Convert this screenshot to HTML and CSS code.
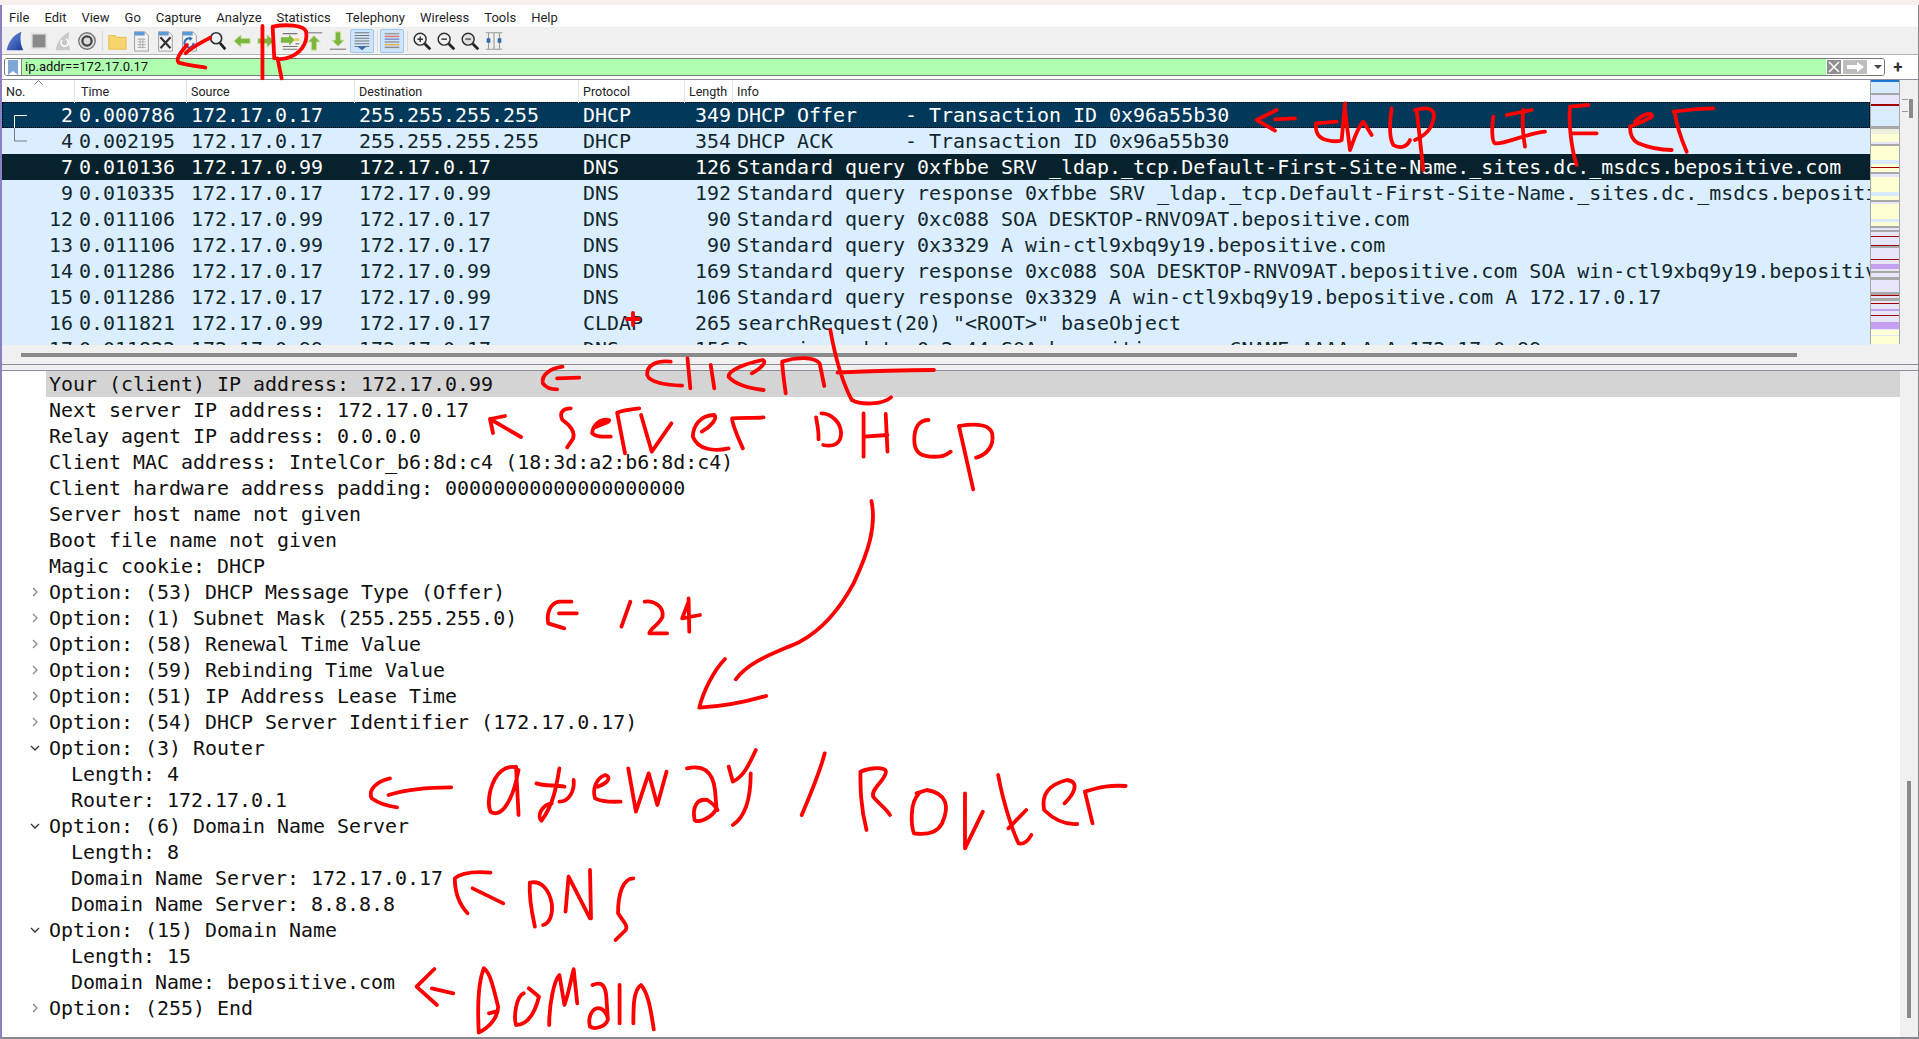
FILE: index.html
```html
<!DOCTYPE html>
<html lang="en">
<head>
<meta charset="utf-8">
<title>Wireshark DHCP capture</title>
<link rel="stylesheet" href="styles.css">
</head>
<body>
<div class="strip"></div>
<div class="app">
  <nav class="menu">
    <span>File</span><span>Edit</span><span>View</span><span>Go</span><span>Capture</span><span>Analyze</span><span>Statistics</span><span>Telephony</span><span>Wireless</span><span>Tools</span><span>Help</span>
  </nav>

  <div class="toolbar">
    <svg class="ic" viewBox="0 0 24 24"><defs><linearGradient id="fin" x1="0" y1="0" x2="1" y2="1"><stop offset="0" stop-color="#6d93dd"/><stop offset="1" stop-color="#173b9c"/></linearGradient></defs><path d="M3 22C5 12 11 5 19 2C17 9 18 16 21 22Z" fill="url(#fin)"/></svg>
    <svg class="ic" viewBox="0 0 24 24"><rect x="3" y="3" width="18" height="18" fill="#e2e2e2"/><rect x="5" y="5" width="14" height="14" fill="#8a8a8a"/></svg>
    <svg class="ic" viewBox="0 0 24 24"><path d="M4 22C6 12 11 6 19 2C17 9 18 16 20 22Z" fill="#c9c9c9"/><path d="M15 10a4 4 0 1 1-4 1" fill="none" stroke="#fff" stroke-width="1.6"/></svg>
    <svg class="ic" viewBox="0 0 24 24"><circle cx="12" cy="12" r="9" fill="#ddd" stroke="#777" stroke-width="1.5"/><circle cx="12" cy="12" r="5" fill="none" stroke="#444" stroke-width="2.5"/><circle cx="12" cy="12" r="2" fill="#ddd"/></svg>
    <i class="sep"></i>
    <svg class="ic" viewBox="0 0 24 24"><path d="M3 6h7l2 2h10v13H3Z" fill="#f7d36b" stroke="#e6bd52"/></svg>
    <svg class="ic" viewBox="0 0 24 24"><path d="M5 2h11l4 4v17H5Z" fill="#f4f4f4" stroke="#999"/><path d="M5 2h11v4H5Z" fill="#5d9bd8"/><path d="M8 10h9M8 13h9M8 16h9M8 19h9M11 9v11M14 9v11" stroke="#aaa" fill="none"/></svg>
    <svg class="ic" viewBox="0 0 24 24"><path d="M5 2h11l4 4v17H5Z" fill="#f4f4f4" stroke="#999"/><path d="M5 2h11v4H5Z" fill="#5d9bd8"/><path d="M7 8l11 12M18 8L7 20" stroke="#333" stroke-width="2.4"/></svg>
    <svg class="ic" viewBox="0 0 24 24"><path d="M5 2h11l4 4v17H5Z" fill="#f4f4f4" stroke="#999"/><path d="M5 2h11v4H5Z" fill="#5d9bd8"/><path d="M17 14a5 5 0 1 1-3-4.500" fill="none" stroke="#2f6fb5" stroke-width="2.2"/><path d="M12 7l4 2-3 3Z" fill="#2f6fb5"/></svg>
    <i class="gap"></i>
    <svg class="ic" viewBox="0 0 24 24"><circle cx="10" cy="9" r="6" fill="#eef2f5" stroke="#333" stroke-width="1.8"/><path d="M14 14l6 7" stroke="#222" stroke-width="3"/></svg>
    <svg class="ic" viewBox="0 0 24 24"><path d="M3 12l8-7v4h10v6H11v4Z" fill="#7cb63c" stroke="#d7e6c0"/></svg>
    <svg class="ic" viewBox="0 0 24 24"><path d="M21 12l-8-7v4H3v6h10v4Z" fill="#7cb63c" stroke="#d7e6c0"/></svg>
    <svg class="ic" viewBox="0 0 24 24"><path d="M4 4h16M4 18h16M4 21h16" stroke="#777" stroke-width="1.3"/><path d="M2 8h9V5l6 6-6 6v-3H2Z" fill="#7cb63c"/><path d="M17 9h5v3h-5Z" fill="#f3d250"/><path d="M18 15h4" stroke="#777" stroke-width="1.3"/></svg>
    <svg class="ic" viewBox="0 0 24 24"><path d="M3 3h18" stroke="#999" stroke-width="1.6"/><path d="M12 6l7 7h-4v9H9v-9H5Z" fill="#7cb63c" stroke="#d7e6c0"/></svg>
    <svg class="ic" viewBox="0 0 24 24"><path d="M3 21h18" stroke="#999" stroke-width="1.6"/><path d="M12 18l7-7h-4V2H9v9H5Z" fill="#7cb63c" stroke="#d7e6c0"/></svg>
    <span class="tg"><svg class="ic" viewBox="0 0 24 24"><path d="M4 3h16M4 6h16M4 9h16M4 12h16M4 15h16M4 18h16" stroke="#777" stroke-width="1.200"/><path d="M7 18h10l-5 4Z" fill="#2e6bb0"/></svg></span>
    <i class="sep"></i>
    <span class="tg"><svg class="ic" viewBox="0 0 24 24"><path d="M4 4h16" stroke="#999" stroke-width="1.600"/><path d="M4 7h16" stroke="#e0736c" stroke-width="1.600"/><path d="M4 10h16" stroke="#7a8fc8" stroke-width="1.600"/><path d="M4 13h16" stroke="#999" stroke-width="1.600"/><path d="M4 16h16" stroke="#e4b04c" stroke-width="1.600"/><path d="M4 19h16" stroke="#8a8a8a" stroke-width="1.600"/></svg></span>
    <i class="sep"></i>
    <svg class="ic" viewBox="0 0 24 24"><circle cx="10" cy="10" r="6.500" fill="#eef2f5" stroke="#333" stroke-width="1.600"/><path d="M7 10h6M10 7v6" stroke="#333" stroke-width="1.600"/><path d="M15 15l6 6" stroke="#222" stroke-width="3"/></svg>
    <svg class="ic" viewBox="0 0 24 24"><circle cx="10" cy="10" r="6.500" fill="#eef2f5" stroke="#333" stroke-width="1.600"/><path d="M7 10h6" stroke="#333" stroke-width="1.600"/><path d="M15 15l6 6" stroke="#222" stroke-width="3"/></svg>
    <svg class="ic" viewBox="0 0 24 24"><circle cx="10" cy="10" r="6.500" fill="#dfe3e6" stroke="#333" stroke-width="1.600"/><path d="M7 10h6" stroke="#666" stroke-width="2"/><path d="M15 15l6 6" stroke="#222" stroke-width="3"/></svg>
    <svg class="ic" viewBox="0 0 24 24"><path d="M3 3h18M3 21h18M6 3v18M18 3v18M12 3v18" stroke="#999" stroke-width="1.200"/><path d="M4 9h4v5H4ZM16 9h4v5h-4Z" fill="#2e6bb0"/></svg>
  </div>

  <div class="filter-row">
    <div class="filter">
      <span class="bm"><svg width="10" height="15" viewBox="0 0 10 15"><path d="M0 0h10v15L5 11 0 15Z" fill="#7fa8d8"/></svg></span>
      <span class="expr">ip.addr==172.17.0.17</span>
      <span class="fx"><svg width="14" height="14" viewBox="0 0 14 14"><rect width="14" height="14" fill="#8f8f8f"/><path d="M2 2l10 10M12 2L2 12" stroke="#fff" stroke-width="1.500"/></svg></span>
      <span class="fa"><svg width="24" height="14" viewBox="0 0 24 14"><rect width="24" height="14" rx="1" fill="#bdbdbd"/><path d="M4 5h10V2l7 5-7 5V9H4Z" fill="#fff"/></svg></span>
      <span class="fd"></span>
    </div>
    <span class="plus">+</span>
  </div>

  <section class="packets">
    <div class="plist">
      <div class="phead">
        <span>No.<svg class="sort" width="9" height="5" viewBox="0 0 9 5"><path d="M0.500 4.500l4-4 4 4" fill="none" stroke="#777"/></svg></span><span>Time</span><span>Source</span><span>Destination</span><span>Protocol</span><span>Length</span><span class="hinfo">Info</span>
      </div>
      <div class="prow cur"><span class="no">2</span><span>0.000786</span><span>172.17.0.17</span><span>255.255.255.255</span><span>DHCP</span><span class="len">349</span><span class="info">DHCP Offer    - Transaction ID 0x96a55b30</span></div>
      <div class="prow"><span class="no">4</span><span>0.002195</span><span>172.17.0.17</span><span>255.255.255.255</span><span>DHCP</span><span class="len">354</span><span class="info">DHCP ACK      - Transaction ID 0x96a55b30</span></div>
      <div class="prow alert"><span class="no">7</span><span>0.010136</span><span>172.17.0.99</span><span>172.17.0.17</span><span>DNS</span><span class="len">126</span><span class="info">Standard query 0xfbbe SRV _ldap._tcp.Default-First-Site-Name._sites.dc._msdcs.bepositive.com</span></div>
      <div class="prow"><span class="no">9</span><span>0.010335</span><span>172.17.0.17</span><span>172.17.0.99</span><span>DNS</span><span class="len">192</span><span class="info">Standard query response 0xfbbe SRV _ldap._tcp.Default-First-Site-Name._sites.dc._msdcs.bepositive.com SRV 0 100 389</span></div>
      <div class="prow"><span class="no">12</span><span>0.011106</span><span>172.17.0.99</span><span>172.17.0.17</span><span>DNS</span><span class="len">90</span><span class="info">Standard query 0xc088 SOA DESKTOP-RNVO9AT.bepositive.com</span></div>
      <div class="prow"><span class="no">13</span><span>0.011106</span><span>172.17.0.99</span><span>172.17.0.17</span><span>DNS</span><span class="len">90</span><span class="info">Standard query 0x3329 A win-ctl9xbq9y19.bepositive.com</span></div>
      <div class="prow"><span class="no">14</span><span>0.011286</span><span>172.17.0.17</span><span>172.17.0.99</span><span>DNS</span><span class="len">169</span><span class="info">Standard query response 0xc088 SOA DESKTOP-RNVO9AT.bepositive.com SOA win-ctl9xbq9y19.bepositive.com</span></div>
      <div class="prow"><span class="no">15</span><span>0.011286</span><span>172.17.0.17</span><span>172.17.0.99</span><span>DNS</span><span class="len">106</span><span class="info">Standard query response 0x3329 A win-ctl9xbq9y19.bepositive.com A 172.17.0.17</span></div>
      <div class="prow"><span class="no">16</span><span>0.011821</span><span>172.17.0.99</span><span>172.17.0.17</span><span>CLDAP</span><span class="len">265</span><span class="info">searchRequest(20) "&lt;ROOT&gt;" baseObject</span></div>
      <div class="prow"><span class="no">17</span><span>0.011822</span><span>172.17.0.99</span><span>172.17.0.17</span><span>DNS</span><span class="len">156</span><span class="info">Dynamic update 0x2c44 SOA bepositive.com CNAME AAAA A A 172.17.0.99</span></div>
      <svg class="rel" width="14" height="40" viewBox="0 0 14 40"><path d="M13 .5H.5V26" fill="none" stroke="#fff"/><path d="M.5 13V26H13" fill="none" stroke="#71808c"/></svg>
    </div>
    <div class="mmap"></div>
    <div class="vbar"><i class="tick t1"></i><i class="tick t2"></i><i class="thumb-p"></i></div>
  </section>

  <div class="hbar"><i class="hthumb"></i></div>
  <div class="split"></div>

  <section class="detail">
    <div class="dlist">
      <div class="drow sel">Your (client) IP address: 172.17.0.99</div>
      <div class="drow">Next server IP address: 172.17.0.17</div>
      <div class="drow">Relay agent IP address: 0.0.0.0</div>
      <div class="drow">Client MAC address: IntelCor_b6:8d:c4 (18:3d:a2:b6:8d:c4)</div>
      <div class="drow">Client hardware address padding: 00000000000000000000</div>
      <div class="drow">Server host name not given</div>
      <div class="drow">Boot file name not given</div>
      <div class="drow">Magic cookie: DHCP</div>
      <div class="drow"><svg class="chev" viewBox="0 0 10 10"><path d="M3 1l4 4-4 4"/></svg>Option: (53) DHCP Message Type (Offer)</div>
      <div class="drow"><svg class="chev" viewBox="0 0 10 10"><path d="M3 1l4 4-4 4"/></svg>Option: (1) Subnet Mask (255.255.255.0)</div>
      <div class="drow"><svg class="chev" viewBox="0 0 10 10"><path d="M3 1l4 4-4 4"/></svg>Option: (58) Renewal Time Value</div>
      <div class="drow"><svg class="chev" viewBox="0 0 10 10"><path d="M3 1l4 4-4 4"/></svg>Option: (59) Rebinding Time Value</div>
      <div class="drow"><svg class="chev" viewBox="0 0 10 10"><path d="M3 1l4 4-4 4"/></svg>Option: (51) IP Address Lease Time</div>
      <div class="drow"><svg class="chev" viewBox="0 0 10 10"><path d="M3 1l4 4-4 4"/></svg>Option: (54) DHCP Server Identifier (172.17.0.17)</div>
      <div class="drow"><svg class="chev open" viewBox="0 0 10 10"><path d="M1 3l4 4 4-4"/></svg>Option: (3) Router</div>
      <div class="drow sub">Length: 4</div>
      <div class="drow sub">Router: 172.17.0.1</div>
      <div class="drow"><svg class="chev open" viewBox="0 0 10 10"><path d="M1 3l4 4 4-4"/></svg>Option: (6) Domain Name Server</div>
      <div class="drow sub">Length: 8</div>
      <div class="drow sub">Domain Name Server: 172.17.0.17</div>
      <div class="drow sub">Domain Name Server: 8.8.8.8</div>
      <div class="drow"><svg class="chev open" viewBox="0 0 10 10"><path d="M1 3l4 4 4-4"/></svg>Option: (15) Domain Name</div>
      <div class="drow sub">Length: 15</div>
      <div class="drow sub">Domain Name: bepositive.com</div>
      <div class="drow"><svg class="chev" viewBox="0 0 10 10"><path d="M3 1l4 4-4 4"/></svg>Option: (255) End</div>
    </div>
    <div class="dbar"><i class="dthumb"></i></div>
  </section>
</div>

<svg class="ink" width="1919" height="1039" viewBox="0 0 1919 1039">
  <g transform="scale(.4081633 .3333333)">
    <path d="M515 113C490 130 465 145 455 160"/>
    <path d="M458 135C440 160 430 180 438 188C460 196 490 200 503 203"/>
    <path d="M643 78L643 235"/>
    <path d="M690 235L680 175M672 175L668 80C700 72 745 75 750 95C755 130 735 165 700 175L682 178"/>
  </g>
  <g transform="translate(1240 90) scale(.3333333)">
    <path d="M110 60L50 90L105 122M105 88L165 85"/>
    <path d="M290 95L228 100C225 125 235 145 260 150C280 155 300 155 305 150M315 40L305 150"/>
    <path d="M315 60L330 180L345 140C355 115 365 100 370 95L395 135"/>
    <path d="M455 55C450 90 445 140 460 165C475 175 500 175 510 150"/>
    <path d="M530 60L550 240M525 60C560 50 580 55 582 75C580 110 560 135 525 150"/>
    <path d="M760 80C755 110 755 155 765 160C790 165 860 130 915 125M850 60C845 100 850 140 855 170M800 75L875 60"/>
    <path d="M1045 45L990 50C985 100 995 180 1010 225M995 130L1070 130"/>
    <path d="M1185 95C1210 70 1240 65 1235 80C1225 90 1190 100 1170 110C1170 130 1175 150 1195 160C1230 175 1270 180 1295 180"/>
    <path d="M1300 65C1340 60 1380 55 1420 55M1305 70C1310 110 1325 150 1340 185"/>
  </g>
  <path d="M627 319H639M633 313V325"/>
  <path d="M521 437L490 419M490 419L505 416M490 419L493 433"/>
  <g transform="translate(500 340) scale(.3571429 .3333333)">
    <path d="M175 80C140 85 115 105 120 130C130 145 150 148 160 148M160 115L222 113"/>
    <path d="M478 65C440 60 410 75 412 105C420 130 470 135 510 137"/>
    <path d="M525 55L533 145M590 75L600 145"/>
    <path d="M705 100C730 85 750 65 735 60C690 70 640 90 640 110C660 135 700 145 738 150"/>
    <path d="M800 160C795 120 790 80 790 65C830 50 880 50 895 70L908 138"/>
    <path d="M925 -30C940 60 960 130 985 180C1010 195 1070 195 1095 172M945 98C1000 95 1100 90 1215 90"/>
    <path d="M198 205C175 205 165 220 175 240C195 255 210 275 205 295L188 322"/>
    <path d="M270 260C290 250 310 245 305 240C280 235 260 255 258 280C270 292 290 290 310 290"/>
    <path d="M390 205C365 208 340 212 328 218L350 340M395 225L425 335L480 250"/>
    <path d="M565 275C590 260 610 235 600 225C560 225 540 260 540 290C555 330 600 335 640 325"/>
    <path d="M680 325C665 290 650 250 650 235C680 232 710 235 738 232"/>
    <path d="M885 232C890 260 893 280 892 298M900 220C930 220 955 250 955 280C955 310 935 322 905 315"/>
    <path d="M1018 220L1018 350M1080 222L1085 335M1020 290L1085 285"/>
    <path d="M1200 240C1175 240 1160 260 1160 300C1160 340 1180 352 1225 350C1245 350 1255 340 1262 335"/>
    <path d="M1285 258L1325 448M1285 258C1330 250 1370 250 1378 280C1385 320 1360 345 1333 353"/>
    <path d="M1040 483C1055 560 1030 640 990 730C950 810 900 870 840 905C780 935 700 960 660 1018"/>
    <path d="M630 957C600 990 570 1050 558 1103C620 1100 690 1085 745 1068"/>
    <path d="M200 785L165 785C140 790 130 820 135 850L180 865M165 820L215 820"/>
    <path d="M365 785L340 860M405 785C430 780 460 800 455 830C445 855 420 865 418 880L468 880"/>
    <path d="M528 775L530 875M510 835L528 785M510 835L560 825"/>
  </g>
  <g transform="translate(340 730) scale(.5102041 .3333333)">
    <path d="M98 145C70 155 55 180 62 205C80 225 100 230 112 232M95 195C130 178 170 172 218 172"/>
    <path d="M345 112C325 105 305 125 295 180C290 210 292 235 295 245C310 260 335 240 350 120M345 110L350 255"/>
    <path d="M430 115C425 160 420 220 395 272C385 260 395 225 415 220M385 160C400 168 420 165 440 170M458 150C460 180 450 215 430 215"/>
    <path d="M505 170C530 155 530 140 520 135C500 145 495 180 500 205C515 218 540 215 550 215"/>
    <path d="M565 115L580 245L605 130L622 225L640 125"/>
    <path d="M680 115C710 105 730 120 735 180L738 235C730 265 700 280 695 270C690 230 700 205 720 210C735 225 740 240 740 240"/>
    <path d="M762 110L770 155C790 140 800 110 815 60M805 130C805 200 795 260 770 285"/>
    <path d="M950 70C940 130 920 200 905 255"/>
    <path d="M1032 300C1020 230 1020 170 1020 125C1040 112 1070 110 1070 125C1070 150 1040 175 1045 200C1055 220 1070 235 1078 255"/>
    <path d="M1135 190C1115 220 1120 290 1125 310C1150 315 1170 310 1180 280C1195 230 1190 190 1150 180L1130 190"/>
    <path d="M1225 190L1225 355L1260 245"/>
    <path d="M1290 135C1300 220 1320 310 1330 340C1340 345 1350 330 1355 315M1310 295L1345 240"/>
    <path d="M1420 220C1440 190 1450 155 1425 150C1385 165 1375 200 1380 240C1400 270 1420 285 1445 282"/>
    <path d="M1475 280L1460 185C1490 170 1510 165 1540 168"/>
    <path d="M295 428C270 425 240 425 225 445C225 490 235 525 250 550M260 475L320 520"/>
    <path d="M372 460C370 510 378 560 382 590M372 458C395 450 410 480 415 520C418 555 410 580 398 585"/>
    <path d="M448 440L442 545M448 440L490 565M490 420L492 565"/>
    <path d="M575 445C555 445 545 490 545 550C555 575 565 585 560 600L540 630"/>
    <path d="M185 717L150 770L190 825M180 775L222 790"/>
    <path d="M282 715C270 760 270 850 272 908C295 890 310 860 310 830C300 770 295 730 282 715M292 850L305 845"/>
    <path d="M360 790C345 800 340 860 345 885C365 885 380 860 390 800L370 775"/>
    <path d="M410 885C410 820 420 750 430 735L440 825C450 780 455 730 458 718L465 820"/>
    <path d="M495 765C510 755 520 760 522 800L525 870C520 890 500 900 490 890C485 860 495 830 510 835C520 840 525 860 525 870"/>
    <path d="M548 765L548 880M575 880C575 830 575 780 590 765C605 790 610 850 615 898"/>
  </g>
</svg>
</body>
</html>
```

FILE: styles.css
```css
* { box-sizing: border-box; }
html, body { margin: 0; padding: 0; background: #fff; overflow: hidden; }
body { position: relative; width: 1919px; height: 1039px; font-family: "Roboto", "Liberation Sans", sans-serif; font-size: 12px; color: #222; }

.strip { height: 5px; background: #f8f0ec; }
.app { height: 1034px; display: flex; flex-direction: column; border-left: 2px solid #8d7fc4; border-right: 1px solid #868a8e; border-bottom: 2px solid #868a8e; }

.menu { height: 23px; flex: none; display: flex; align-items: center; gap: 15px; padding: 2px 0 0 7px; background: #fff; border-bottom: 1px solid #ececec; font-size: 13px; color: #1f1f1f; }

.toolbar { height: 27px; flex: none; display: flex; align-items: center; padding-left: 1px; background: #f0f0f0; border-bottom: 1px solid #b4b4b4; }
.ic { width: 22px; height: 22px; margin: 0 1px; flex: none; display: block; }
.sep { width: 6px; height: 20px; flex: none; position: relative; }
.sep::after { content: ""; display: block; width: 1px; height: 20px; margin-left: 3px; background: #d8d8d8; }
.gap { width: 5px; flex: none; }
.tg { display: block; flex: none; width: 24px; height: 24px; background: #cde4fb; border: 1px solid #9cc8f0; border-radius: 2px; }
.tg .ic { margin: 0; }

.filter-row { height: 25px; flex: none; display: flex; align-items: center; padding: 0 0 0 2px; background: #fff; border-bottom: 1px solid #8a8f99; }
.filter { width: 1881px; height: 18px; display: flex; align-items: stretch; background: #b0ffb0; border: 1px solid #777; border-radius: 3px; overflow: hidden; }
.bm { width: 17px; flex: none; display: flex; align-items: center; justify-content: center; background: #fff; border-right: 1px solid #888; }
.expr { flex: 1; padding-left: 3px; line-height: 16px; font-size: 13px; color: #111; }
.fx, .fa { display: flex; align-items: center; flex: none; background: #fff; }
.fx { padding: 0 2px 0 1px; }
.fa { padding-right: 4px; }
.fd { width: 13px; flex: none; background: #fff; position: relative; }
.fd::after { content: ""; position: absolute; left: 3px; top: 6px; border: 4px solid transparent; border-top: 4px solid #444; }
.plus { width: 26px; text-align: center; font-size: 17px; font-weight: 700; line-height: 19px; color: #333; }

.packets { height: 265px; flex: none; display: flex; background: #f0f0f0; }
.plist { width: 1868px; flex: none; position: relative; overflow: hidden; background: #daeeff; }
.phead, .prow { display: grid; grid-template-columns: 73px 112px 168px 224px 106px 48px 1fr; }
.phead { height: 22px; background: #fff; color: #222; font-size: 12.500px; line-height: 23px; }
.phead span { position: relative; padding-left: 4px; border-right: 1px solid #e4e4e4; }
.phead span:nth-child(2) { padding-left: 6px; }
.phead .hinfo { border-right: 0; }
.sort { position: absolute; left: 32px; top: 0; }

.prow { height: 26px; line-height: 26px; font-family: "DejaVu Sans Mono", "Liberation Mono", monospace; font-size: 19.950px; color: #12272e; white-space: pre; }
.prow span { padding-left: 4px; overflow: hidden; }
.prow .no { padding: 0 2px 0 0; text-align: right; }
.prow .len { padding: 0 2px 0 0; text-align: right; }
.prow.cur { background: #02385a; color: #fff; outline: 1px dotted #000; outline-offset: -1px; }
.prow.alert { background: #07222c; color: #fff; }
.rel { position: absolute; left: 12px; top: 35px; }

.mmap { width: 30px; flex: none; border-left: 1px solid #a8a8a8; border-right: 1px solid #a8a8a8; height: 264px;
  background: linear-gradient(to bottom,
    #1a78d0 0 2px, #d8ebff 2px 13px, #a8a8a8 13px 15px, #e6e6fb 15px 24px, #a00000 24px 26px, #d8ebff 26px 46px,
    #a8a8a8 46px 49px, #f0f0e0 49px 54px, #ffffd4 54px 62px, #e6e6fb 62px 64px, #a8a8a8 64px 66px, #ffffd4 66px 80px,
    #d8ebff 80px 84px, #ffffd4 84px 87px, #a00000 87px 88px, #ffffd4 88px 92px, #a8a8a8 92px 94px, #e6e6fb 94px 97px,
    #ffffd4 97px 112px, #d8ebff 112px 116px, #ffffd4 116px 120px, #a8a8a8 120px 122px, #e6e6fb 122px 124px, #ffffd4 124px 139px,
    #d8ebff 139px 142px, #ffffd4 142px 146px, #a8a8a8 146px 148px, #e6e6fb 148px 150px, #a8a8a8 150px 152px, #e6e6fb 152px 156px,
    #a00000 156px 157px, #e6e6fb 157px 165px, #a00000 165px 166px, #a8a8a8 166px 168px, #e6e6fb 168px 179px, #a00000 179px 180px,
    #e6e6fb 180px 184px, #c4a0f0 184px 189px, #e6e6fb 189px 191px, #a8a8a8 191px 193px, #e6e6fb 193px 197px, #a8a8a8 197px 200px,
    #e6e6fb 200px 212px, #a8a8a8 212px 215px, #a00000 215px 216px, #e6e6fb 216px 218px, #a8a8a8 218px 221px, #e6e6fb 221px 223px,
    #a00000 223px 224px, #e6e6fb 224px 229px, #c4a0f0 229px 231px, #e6e6fb 231px 235px, #a00000 235px 236px, #e6e6fb 236px 242px,
    #c4a0f0 242px 249px, #e6e6fb 249px 250px, #ffffd4 250px 255px, #e6e6fb 255px 256px, #ffffd4 256px 264px);
}
.vbar { flex: 1; position: relative; background: #f0f0f0; }
.thumb-p { position: absolute; left: 9px; top: 19px; width: 4px; height: 19px; background: #8a8a8a; }
.tick { position: absolute; left: 2px; width: 6px; height: 1px; background: #999; }
.t1 { top: 19px; }
.t2 { top: 31px; }

.hbar { height: 20px; flex: none; background: #f0f0f0; border-bottom: 1px solid #8a8f99; padding: 8px 0 0 19px; }
.hthumb { display: block; width: 1776px; height: 4px; background: #8a8a8a; }
.split { height: 6px; flex: none; background: #f0f0f0; border-bottom: 1px solid #8a8f99; }

.detail { flex: 1; display: flex; min-height: 0; background: #fff; }
.dlist { width: 1898px; flex: none; overflow: hidden; }
.drow { position: relative; height: 26px; line-height: 26px; margin-left: 44px; padding-left: 3px; font-family: "DejaVu Sans Mono", "Liberation Mono", monospace; font-size: 19.950px; color: #111; white-space: pre; }
.drow.sel { background: #d4d4d4; }
.drow.sub { padding-left: 25px; }
.chev { position: absolute; left: -16px; top: 8px; width: 10px; height: 10px; }
.chev path { fill: none; stroke: #8a8a8a; stroke-width: 1.300; }
.chev.open path { stroke: #333; }
.dbar { flex: 1; position: relative; background: #f0f0f0; }
.dthumb { position: absolute; left: 7px; top: 410px; width: 4px; height: 237px; background: #8a8a8a; }

.ink { position: absolute; left: 0; top: 0; pointer-events: none; }
.ink path { fill: none; stroke: #f00; stroke-width: 3.800; stroke-linecap: round; stroke-linejoin: round; vector-effect: non-scaling-stroke; }
```
